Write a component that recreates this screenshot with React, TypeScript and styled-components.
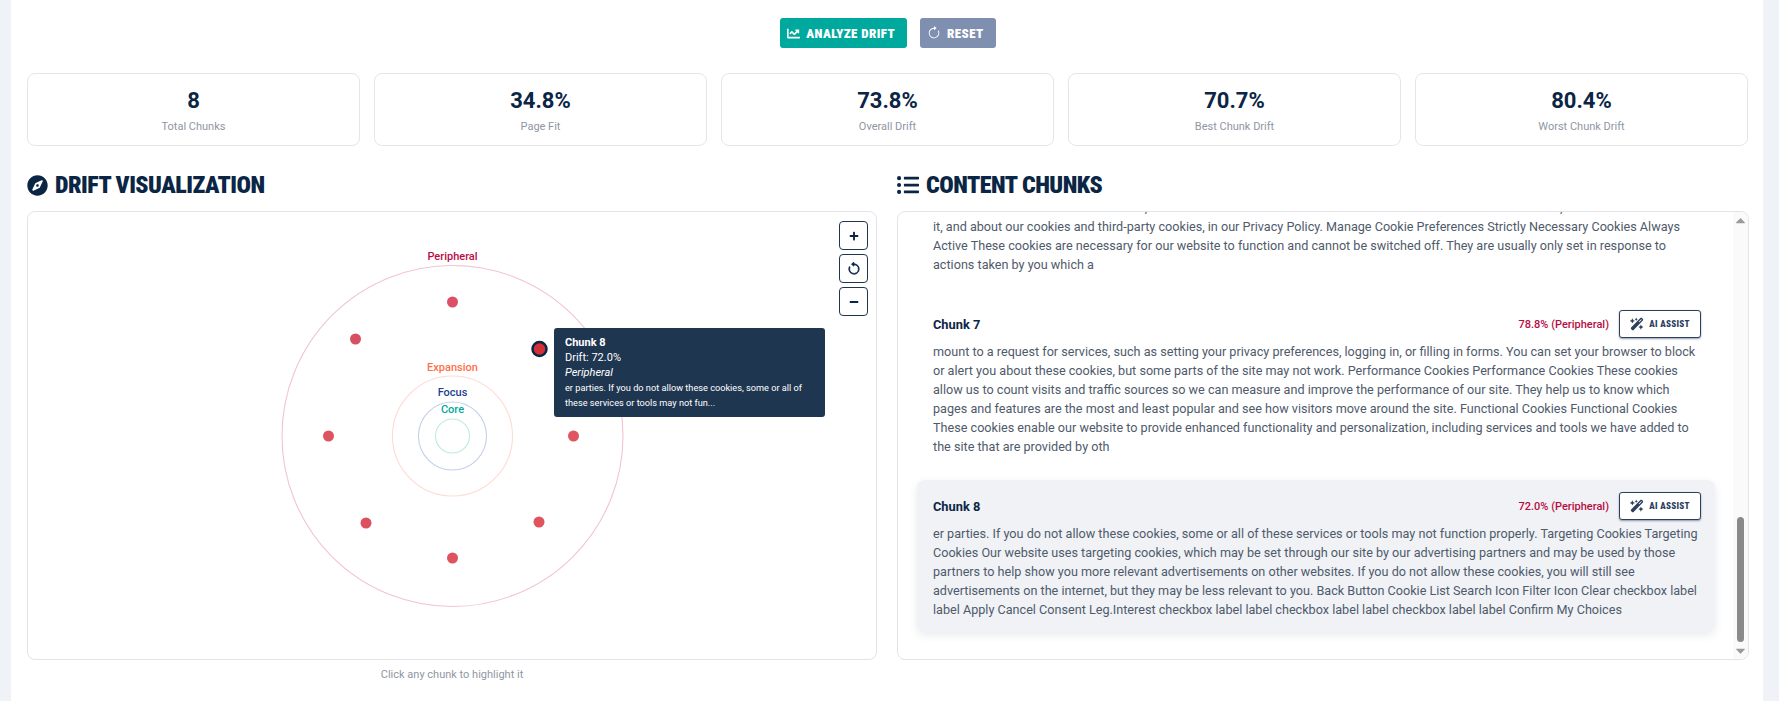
import React from 'react';
import styled, { createGlobalStyle } from 'styled-components';
import { FaChartLine, FaCompass, FaListUl, FaPlus, FaMinus, FaCaretUp, FaCaretDown } from 'react-icons/fa';
import { FaWandMagicSparkles } from 'react-icons/fa6';
import { BsArrowClockwise, BsArrowCounterclockwise } from 'react-icons/bs';

const NAVY = '#0b2545';
const DISPLAY_FONT = '"Roboto", "Liberation Sans", sans-serif';

interface Chunk {
  id: number;
  drift: string;
  text: string;
}

const STATS = [
  { value: '8', label: 'Total Chunks' },
  { value: '34.8%', label: 'Page Fit' },
  { value: '73.8%', label: 'Overall Drift' },
  { value: '70.7%', label: 'Best Chunk Drift' },
  { value: '80.4%', label: 'Worst Chunk Drift' }
];

// the list is scrolled to its end: only the tail of chunk 6 is still in view
const SCROLLED_OFF_LINE =
  'This site uses cookies and other tools, which are needed for the site to load. Read more about the data collected, and how we use';
const SCROLLED_TAIL =
  'it, and about our cookies and third-party cookies, in our Privacy Policy. Manage Cookie Preferences Strictly Necessary Cookies Always Active These cookies are necessary for our website to function and cannot be switched off. They are usually only set in response to actions taken by you which a';

const CHUNKS: Chunk[] = [
  {
    id: 7,
    drift: '78.8%',
    text: 'mount to a request for services, such as setting your privacy preferences, logging in, or filling in forms. You can set your browser to block or alert you about these cookies, but some parts of the site may not work. Performance Cookies Performance Cookies These cookies allow us to count visits and traffic sources so we can measure and improve the performance of our site. They help us to know which pages and features are the most and least popular and see how visitors move around the site. Functional Cookies Functional Cookies These cookies enable our website to provide enhanced functionality and personalization, including services and tools we have added to the site that are provided by oth'
  },
  {
    id: 8,
    drift: '72.0%',
    text: 'er parties. If you do not allow these cookies, some or all of these services or tools may not function properly. Targeting Cookies Targeting Cookies Our website uses targeting cookies, which may be set through our site by our advertising partners and may be used by those partners to help show you more relevant advertisements on other websites. If you do not allow these cookies, you will still see advertisements on the internet, but they may be less relevant to you. Back Button Cookie List Search Icon Filter Icon Clear checkbox label label Apply Cancel Consent Leg.Interest checkbox label label checkbox label label checkbox label label Confirm My Choices'
  }
];

const RINGS = [
  { r: 170.5, stroke: '#f2c4d0', label: 'Peripheral', labelY: 45, color: '#b80c3f' },
  { r: 60, stroke: '#ffdad2', label: 'Expansion', labelY: 156, color: '#ff7048' },
  { r: 34, stroke: '#c2d0e8', label: 'Focus', labelY: 181, color: '#1f3f96' },
  { r: 17, stroke: '#bdeae3', label: 'Core', labelY: 198, color: '#00a99d' }
];

const DOTS = [
  { x: 424.5, y: 90, fill: '#dc4f66' },
  { x: 327.5, y: 127, fill: '#d84f63' },
  { x: 300.5, y: 224, fill: '#dd5360' },
  { x: 545.5, y: 224, fill: '#e0555f' },
  { x: 338, y: 311, fill: '#dc5060' },
  { x: 511, y: 310, fill: '#df545e' },
  { x: 424.5, y: 346, fill: '#df535f' }
];

const GlobalStyle = createGlobalStyle`
  html, body {
    margin: 0;
    padding: 0;
    background: #eff3f7;
    font-family: "Roboto", "Liberation Sans", sans-serif;
  }
  * {
    box-sizing: border-box;
  }
`;

const App = () => {
  return (
    <>
      <GlobalStyle />
      <S.Page>
        <S.Actions>
          <S.ActionButton $bg="#00a99d">
            <FaChartLine size={13} />
            Analyze Drift
          </S.ActionButton>
          <S.ActionButton $bg="#7f8fb0">
            <BsArrowClockwise size={14} />
            Reset
          </S.ActionButton>
        </S.Actions>

        <S.Stats>
          {STATS.map((stat) => (
            <S.StatCard key={stat.label}>
              <S.StatValue>{stat.value}</S.StatValue>
              <S.StatLabel>{stat.label}</S.StatLabel>
            </S.StatCard>
          ))}
        </S.Stats>

        <S.Columns>
          <section>
            <S.Heading>
              <FaCompass size={21} />
              Drift Visualization
            </S.Heading>
            <S.VizPanel>
              <S.Chart viewBox="0 0 850 447" width={850} height={447}>
                {RINGS.map((ring) => (
                  <circle key={ring.label} cx={424.5} cy={224} r={ring.r} fill="none" stroke={ring.stroke} strokeWidth={1.1} />
                ))}
                {RINGS.map((ring) => (
                  <S.RingLabel key={ring.label} x={424.5} y={ring.labelY} fill={ring.color}>
                    {ring.label}
                  </S.RingLabel>
                ))}
                {DOTS.map((dot) => (
                  <circle key={`${dot.x}-${dot.y}`} cx={dot.x} cy={dot.y} r={5.5} fill={dot.fill} />
                ))}
                <circle cx={511.5} cy={137} r={7} fill="#d32f36" stroke={NAVY} strokeWidth={2.5} />
              </S.Chart>
              <S.Tooltip>
                <strong>Chunk 8</strong>
                <span>Drift: 72.0%</span>
                <em>Peripheral</em>
                <S.TooltipSnippet>
                  er parties. If you do not allow these cookies, some or all of these services or tools may not fun...
                </S.TooltipSnippet>
              </S.Tooltip>
              <S.ZoomControls>
                <S.ZoomButton>
                  <FaPlus size={10} />
                </S.ZoomButton>
                <S.ZoomButton>
                  <BsArrowCounterclockwise size={14} strokeWidth={0.8} />
                </S.ZoomButton>
                <S.ZoomButton>
                  <FaMinus size={10} />
                </S.ZoomButton>
              </S.ZoomControls>
            </S.VizPanel>
            <S.Caption>Click any chunk to highlight it</S.Caption>
          </section>

          <section>
            <S.Heading>
              <FaListUl size={22} />
              Content Chunks
            </S.Heading>
            <S.ChunksPanel>
              <S.ChunkList>
                <S.ChunkCard $active={false}>
                  <S.ChunkText>{SCROLLED_OFF_LINE}</S.ChunkText>
                  <S.ChunkText>{SCROLLED_TAIL}</S.ChunkText>
                </S.ChunkCard>
                {CHUNKS.map((chunk) => (
                  <S.ChunkCard key={chunk.id} $active={chunk.id === 8}>
                    <S.ChunkHeader>
                      <S.ChunkTitle>Chunk {chunk.id}</S.ChunkTitle>
                      <S.ChunkDrift>{chunk.drift} (Peripheral)</S.ChunkDrift>
                      <S.AssistButton>
                        <FaWandMagicSparkles size={14} />
                        AI Assist
                      </S.AssistButton>
                    </S.ChunkHeader>
                    <S.ChunkText>{chunk.text}</S.ChunkText>
                  </S.ChunkCard>
                ))}
              </S.ChunkList>
              <S.ScrollRail>
                <S.ScrollArrow>
                  <FaCaretUp size={15} />
                </S.ScrollArrow>
                <S.ScrollThumb />
                <S.ScrollArrow>
                  <FaCaretDown size={15} />
                </S.ScrollArrow>
              </S.ScrollRail>
            </S.ChunksPanel>
          </section>
        </S.Columns>
      </S.Page>
    </>
  );
};

export default App;

const S = {
  Page: styled.main`
    margin-left: 11px;
    width: 1752px;
    height: 701px;
    padding: 18px 14px 0 16px;
    background: #fff;
    overflow: hidden;
  `,
  Actions: styled.div`
    display: flex;
    justify-content: center;
    gap: 13px;
  `,
  ActionButton: styled.button<{ $bg: string }>`
    display: flex;
    align-items: center;
    gap: 6px;
    height: 30px;
    padding: 0 12px 0 7px;
    border: 0;
    border-radius: 3px;
    background: ${(p) => p.$bg};
    color: #fff;
    font-family: ${DISPLAY_FONT};
    font-size: 13px;
    font-stretch: 75%;
    font-weight: 900;
    letter-spacing: 0.4px;
    text-transform: uppercase;
  `,
  Stats: styled.div`
    display: grid;
    grid-template-columns: repeat(5, 1fr);
    gap: 14px;
    margin: 25px 1px 0 0;
  `,
  StatCard: styled.div`
    height: 73px;
    padding-top: 14px;
    border: 1px solid #e4e6ec;
    border-radius: 8px;
    text-align: center;
  `,
  StatValue: styled.div`
    color: ${NAVY};
    font-size: 22px;
    font-weight: 700;
    line-height: 26px;
  `,
  StatLabel: styled.div`
    margin-top: 6px;
    color: #8f96a3;
    font-size: 11px;
    line-height: 14px;
  `,
  Columns: styled.div`
    display: grid;
    grid-template-columns: 850px 852px;
    gap: 20px;
    margin-top: 27px;
  `,
  Heading: styled.h2`
    display: flex;
    align-items: center;
    gap: 7px;
    height: 24px;
    margin: 0 0 14px;
    color: ${NAVY};
    font-family: ${DISPLAY_FONT};
    font-size: 24px;
    font-stretch: 75%;
    font-weight: 900;
    letter-spacing: -0.5px;
    text-transform: uppercase;
  `,
  VizPanel: styled.div`
    position: relative;
    height: 449px;
    border: 1px solid #e2e4ea;
    border-radius: 8px;
  `,
  Chart: styled.svg`
    display: block;
  `,
  RingLabel: styled.text`
    font-size: 11px;
    font-weight: 500;
    text-anchor: middle;
    dominant-baseline: middle;
  `,
  Tooltip: styled.div`
    position: absolute;
    left: 526px;
    top: 116px;
    width: 271px;
    height: 89px;
    display: flex;
    flex-direction: column;
    padding: 7px 11px;
    border-radius: 3px;
    background: #1f3651;
    color: #fff;
    font-size: 11px;
    line-height: 15px;
  `,
  TooltipSnippet: styled.span`
    font-size: 9.2px;
  `,
  ZoomControls: styled.div`
    position: absolute;
    top: 9px;
    right: 8px;
    display: flex;
    flex-direction: column;
    gap: 4px;
  `,
  ZoomButton: styled.button`
    display: flex;
    align-items: center;
    justify-content: center;
    width: 29px;
    height: 29px;
    padding: 0;
    border: 1.5px solid #1f3651;
    border-radius: 4px;
    background: #fff;
    color: ${NAVY};
  `,
  Caption: styled.div`
    margin-top: 8px;
    color: #8f96a3;
    font-size: 11px;
    line-height: 14px;
    text-align: center;
  `,
  ChunksPanel: styled.div`
    display: flex;
    height: 449px;
    border: 1px solid #e2e4ea;
    border-radius: 8px;
    overflow: hidden;
  `,
  ChunkList: styled.div`
    flex: 1;
    min-width: 0;
    display: flex;
    flex-direction: column;
    justify-content: flex-end;
    gap: 11px;
    padding: 0 18px 27px 19px;
    overflow: hidden;
  `,
  ChunkCard: styled.article<{ $active: boolean }>`
    flex-shrink: 0;
    padding: 12px 16px 13px;
    border-radius: 8px;
    background: ${(p) => (p.$active ? '#f0f2f6' : 'transparent')};
    box-shadow: ${(p) => (p.$active ? '0 3px 8px rgba(30, 50, 80, 0.1)' : 'none')};
  `,
  ChunkHeader: styled.header`
    display: flex;
    align-items: center;
    height: 28px;
    margin: 0 -2px 4px 0;
  `,
  ChunkTitle: styled.div`
    margin-right: auto;
    color: ${NAVY};
    font-size: 12.8px;
    font-weight: 700;
  `,
  ChunkDrift: styled.div`
    margin-right: 10px;
    color: #b80c3f;
    font-size: 11px;
    font-weight: 500;
  `,
  AssistButton: styled.button`
    display: flex;
    align-items: center;
    justify-content: center;
    gap: 5px;
    width: 82px;
    height: 28px;
    padding: 0;
    border: 1px solid #2d3f5e;
    border-radius: 3px;
    background: #fff;
    box-shadow: 0 1px 2px rgba(20, 40, 70, 0.45);
    color: #2d3f5e;
    font-family: ${DISPLAY_FONT};
    font-size: 9px;
    font-stretch: 75%;
    font-weight: 900;
    letter-spacing: 0.3px;
    text-transform: uppercase;
  `,
  ChunkText: styled.p`
    margin: 0;
    color: #4f5a6b;
    font-size: 12.64px;
    line-height: 19px;
  `,
  ScrollRail: styled.div`
    flex: 0 0 15px;
    display: flex;
    flex-direction: column;
    justify-content: flex-end;
    align-items: center;
    background: #fafafa;
  `,
  ScrollArrow: styled.div`
    height: 17px;
    display: flex;
    align-items: center;
    justify-content: center;
    color: #9a9a9a;
    &:first-child {
      margin-bottom: auto;
    }
  `,
  ScrollThumb: styled.div`
    width: 7px;
    height: 125px;
    border-radius: 4px;
    background: #8a8a8a;
  `
};
